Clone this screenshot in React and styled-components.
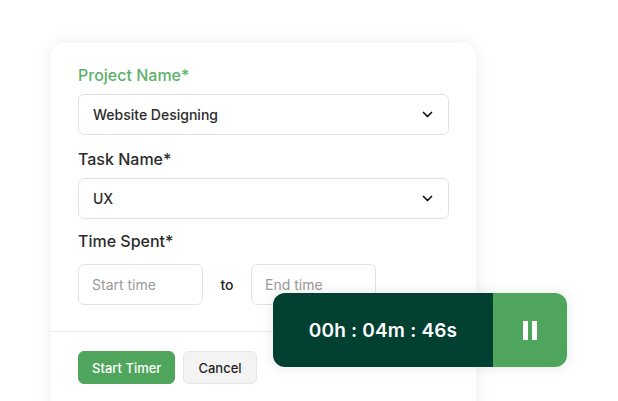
import React from 'react';
import styled, {createGlobalStyle} from 'styled-components';

const GlobalStyle = createGlobalStyle`
  body {
    margin: 0;
    background: #ffffff;
    font-family: Inter, "Liberation Sans", sans-serif;
    color: #2b2b2b;
  }
`;

const Page = styled.div`
  position: relative;
  width: 618px;
  height: 401px;
  overflow: hidden;
  padding: 43px 0 0 51px;
  box-sizing: border-box;
`;

const Card = styled.div`
  position: relative;
  width: 425px;
  height: 400px;
  background: #fff;
  border-radius: 14px;
  box-shadow: 0 0 18px rgba(0, 0, 0, 0.08);
`;

const Form = styled.div`
  padding: 22px 27px 26px;
  display: flex;
  flex-direction: column;
`;

const Field = styled.div`
  display: flex;
  flex-direction: column;
  margin-top: ${p => p.$top || 0}px;
`;

const Label = styled.div`
  font-size: 16px;
  line-height: 20px;
  font-weight: 500;
  color: ${p => (p.$active ? '#5cb26a' : '#2b2b2b')};
  margin-bottom: ${p => p.$gap || 9}px;
`;

const Select = styled.div`
  height: 41px;
  box-sizing: border-box;
  border: 1px solid #e2e2e2;
  border-radius: 6px;
  display: flex;
  align-items: center;
  justify-content: space-between;
  padding: 0 15px 0 14px;
  font-size: 14px;
  font-weight: 500;
  color: #2b2b2b;
`;

const TimeRow = styled.div`
  display: flex;
  align-items: center;
`;

const TimeInput = styled.div`
  width: 125px;
  height: 41px;
  box-sizing: border-box;
  border: 1px solid #e2e2e2;
  border-radius: 6px;
  display: flex;
  align-items: center;
  padding-left: 13px;
  font-size: 14px;
  color: #9a9a9a;
`;

const To = styled.span`
  width: 48px;
  text-align: center;
  font-size: 14px;
  font-weight: 500;
  color: #222;
`;

const Divider = styled.div`
  height: 1px;
  background: #ececec;
`;

const Footer = styled.div`
  display: flex;
  gap: 8px;
  padding: 19px 27px;
`;

const Button = styled.button`
  height: 33px;
  padding: 0 ${p => (p.$primary ? 13 : 14)}px;
  border-radius: 6px;
  border: 1px solid ${p => (p.$primary ? '#4ea55b' : '#e6e6e6')};
  background: ${p => (p.$primary ? '#4ea55b' : '#f3f3f3')};
  color: ${p => (p.$primary ? '#fff' : '#1f1f1f')};
  font-family: inherit;
  font-size: 13px;
  font-weight: 500;
`;

const Timer = styled.div`
  position: absolute;
  left: 222px;
  top: 250px;
  width: 294px;
  height: 74px;
  display: flex;
  border-radius: 12px;
  overflow: hidden;
  box-shadow: 0 0 14px rgba(0, 0, 0, 0.1);
`;

const Clock = styled.div`
  flex: 1;
  background: #024031;
  color: #fff;
  display: flex;
  align-items: center;
  justify-content: center;
  font-size: 19px;
  font-weight: 600;
  letter-spacing: 0.2px;
`;

const PauseBox = styled.div`
  width: 74px;
  background: #4ea55b;
  display: flex;
  align-items: center;
  justify-content: center;
  gap: 4px;
`;

const Bar = styled.span`
  width: 5px;
  height: 19px;
  background: #fff;
`;

const Chevron = () => (
  <svg width="11" height="7" viewBox="0 0 11 7">
    <polyline points="1.5,1.5 5.5,5.5 9.5,1.5" fill="none" stroke="#111" strokeWidth="1.7" strokeLinecap="round" strokeLinejoin="round" />
  </svg>
);

const App = () => {
  return (
    <>
      <GlobalStyle />
      <Page>
        <Card>
          <Form>
            <Field>
              <Label $active>Project Name*</Label>
              <Select>
                Website Designing
                <Chevron />
              </Select>
            </Field>
            <Field $top={14}>
              <Label>Task Name*</Label>
              <Select>
                UX
                <Chevron />
              </Select>
            </Field>
            <Field $top={12}>
              <Label $gap={13}>Time Spent*</Label>
              <TimeRow>
                <TimeInput>Start time</TimeInput>
                <To>to</To>
                <TimeInput>End time</TimeInput>
              </TimeRow>
            </Field>
          </Form>
          <Divider />
          <Footer>
            <Button $primary>Start Timer</Button>
            <Button>Cancel</Button>
          </Footer>
          <Timer>
            <Clock>00h : 04m : 46s</Clock>
            <PauseBox>
              <Bar />
              <Bar />
            </PauseBox>
          </Timer>
        </Card>
      </Page>
    </>
  );
};

export default App;
